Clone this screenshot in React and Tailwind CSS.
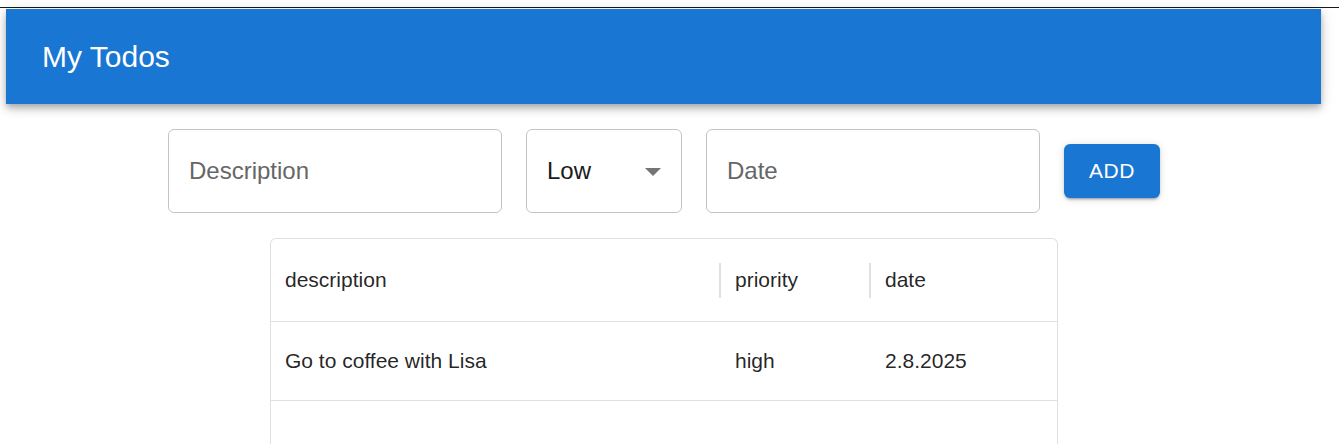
import { useState } from 'react';

const todos = [{ description: 'Go to coffee with Lisa', priority: 'high', date: '2.8.2025' }];

export default function App() {
  const [priority] = useState('Low');

  return (
    <div className="min-h-[444px] bg-white font-['Liberation_Sans',Arial,sans-serif] text-[rgba(0,0,0,0.87)]">
      <div className="h-[7px]" />
      <div className="h-px bg-[#1a1a1a]" />
      <div className="ml-[6px] w-[1315px] pt-px">
        {/* App bar */}
        <header className="h-[95px] bg-[#1976d2] flex items-center pl-[36px] shadow-[0_3px_6px_-1px_rgba(0,0,0,0.2),0_6px_8px_0_rgba(0,0,0,0.14),0_1px_15px_0_rgba(0,0,0,0.12)]">
          <h1 className="text-[30px] leading-none text-white">My Todos</h1>
        </header>

        {/* Add form */}
        <div className="mt-[25px] ml-[162px] flex items-center gap-[24px]">
          <div className="w-[334px] h-[84px] rounded-[6px] border border-[#c4c4c4] flex items-center px-[20px]">
            <input
              placeholder="Description"
              className="w-full outline-none text-[24px] placeholder:text-[#666666] bg-transparent"
            />
          </div>
          <div className="w-[156px] h-[84px] rounded-[6px] border border-[#c4c4c4] flex items-center justify-between pl-[20px] pr-[20px]">
            <span className="text-[24px] text-[#1a1a1a]">{priority}</span>
            <svg width="16" height="8" viewBox="0 0 16 8" className="mt-px">
              <path d="M0 0h16L8 8z" fill="#757575" />
            </svg>
          </div>
          <div className="w-[334px] h-[84px] rounded-[6px] border border-[#c4c4c4] flex items-center px-[20px]">
            <input
              placeholder="Date"
              className="w-full outline-none text-[24px] placeholder:text-[#666666] bg-transparent"
            />
          </div>
          <button className="w-[96px] h-[54px] rounded-[6px] bg-[#1976d2] text-white text-[21px] tracking-[0.5px] shadow-[0_3px_2px_-2px_rgba(0,0,0,0.2),0_2px_3px_0_rgba(0,0,0,0.14),0_1px_8px_0_rgba(0,0,0,0.12)]">
            ADD
          </button>
        </div>

        {/* Todo grid */}
        <div className="mt-[25px] ml-[264px] w-[788px] h-[220px] rounded-t-[6px] border border-[#e0e0e0] border-b-0 text-[21px]">
          <div className="h-[83px] flex items-center border-b border-[#e0e0e0]">
            <div className="w-[450px] h-full flex items-center justify-between">
              <span className="pl-[14px]">description</span>
              <span className="w-[2px] h-[35px] bg-[#e0e0e0]" />
            </div>
            <div className="w-[150px] h-full flex items-center justify-between">
              <span className="pl-[14px]">priority</span>
              <span className="w-[2px] h-[35px] bg-[#e0e0e0]" />
            </div>
            <div className="flex-1 pl-[14px]">date</div>
          </div>
          {todos.map((t) => (
            <div key={t.description} className="h-[79px] flex items-center border-b border-[#e0e0e0]">
              <div className="w-[450px] pl-[14px]">{t.description}</div>
              <div className="w-[150px] pl-[14px]">{t.priority}</div>
              <div className="flex-1 pl-[14px]">{t.date}</div>
            </div>
          ))}
        </div>
      </div>
    </div>
  );
}
